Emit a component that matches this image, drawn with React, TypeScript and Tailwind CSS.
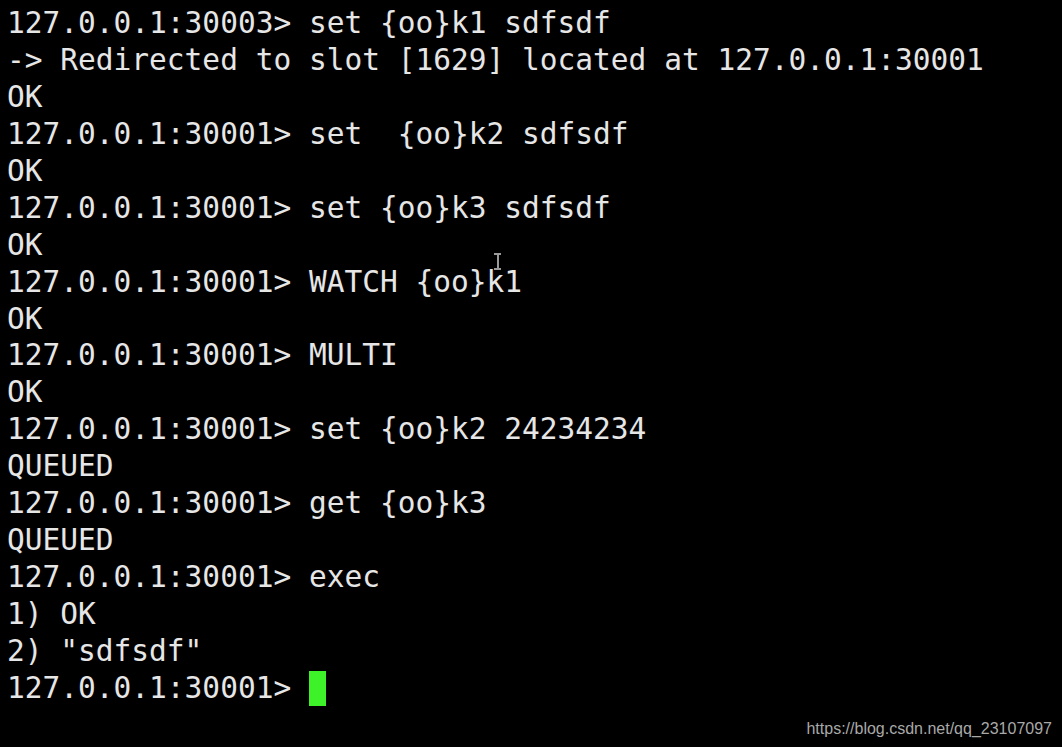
import React from "react";

const lines = [
  "127.0.0.1:30003> set {oo}k1 sdfsdf",
  "-> Redirected to slot [1629] located at 127.0.0.1:30001",
  "OK",
  "127.0.0.1:30001> set  {oo}k2 sdfsdf",
  "OK",
  "127.0.0.1:30001> set {oo}k3 sdfsdf",
  "OK",
  "127.0.0.1:30001> WATCH {oo}k1",
  "OK",
  "127.0.0.1:30001> MULTI",
  "OK",
  "127.0.0.1:30001> set {oo}k2 24234234",
  "QUEUED",
  "127.0.0.1:30001> get {oo}k3",
  "QUEUED",
  "127.0.0.1:30001> exec",
  "1) OK",
  '2) "sdfsdf"',
];

export default function App() {
  return (
    <div className="relative w-[1062px] h-[747px] bg-black overflow-hidden">
      <div
        className="pl-[7px] pt-[5px] text-[29.5px] leading-[36.94px] text-[#e6e6e6] whitespace-pre"
        style={{ fontFamily: '"DejaVu Sans Mono", monospace' }}
      >
        {lines.map((l, i) => (
          <div key={i}>{l}</div>
        ))}
        <div className="flex items-center">
          <span>127.0.0.1:30001&gt; </span>
          <span className="inline-block w-[17px] h-[35px] bg-[#3ef22a]" />
        </div>
      </div>
      <div className="absolute left-[493px] top-[253px] w-[9px] h-[17px] flex flex-col items-center">
        <div className="w-[7px] h-[2px] bg-[#9a9a9a]" />
        <div className="w-[2px] flex-1 bg-[#9a9a9a]" />
        <div className="w-[7px] h-[2px] bg-[#9a9a9a]" />
      </div>
      <div
        className="absolute right-[10px] bottom-[6px] text-[16px] text-[#a9a9a9]"
        style={{ fontFamily: '"Liberation Sans", Arial, sans-serif' }}
      >
        https://blog.csdn.net/qq_23107097
      </div>
    </div>
  );
}
